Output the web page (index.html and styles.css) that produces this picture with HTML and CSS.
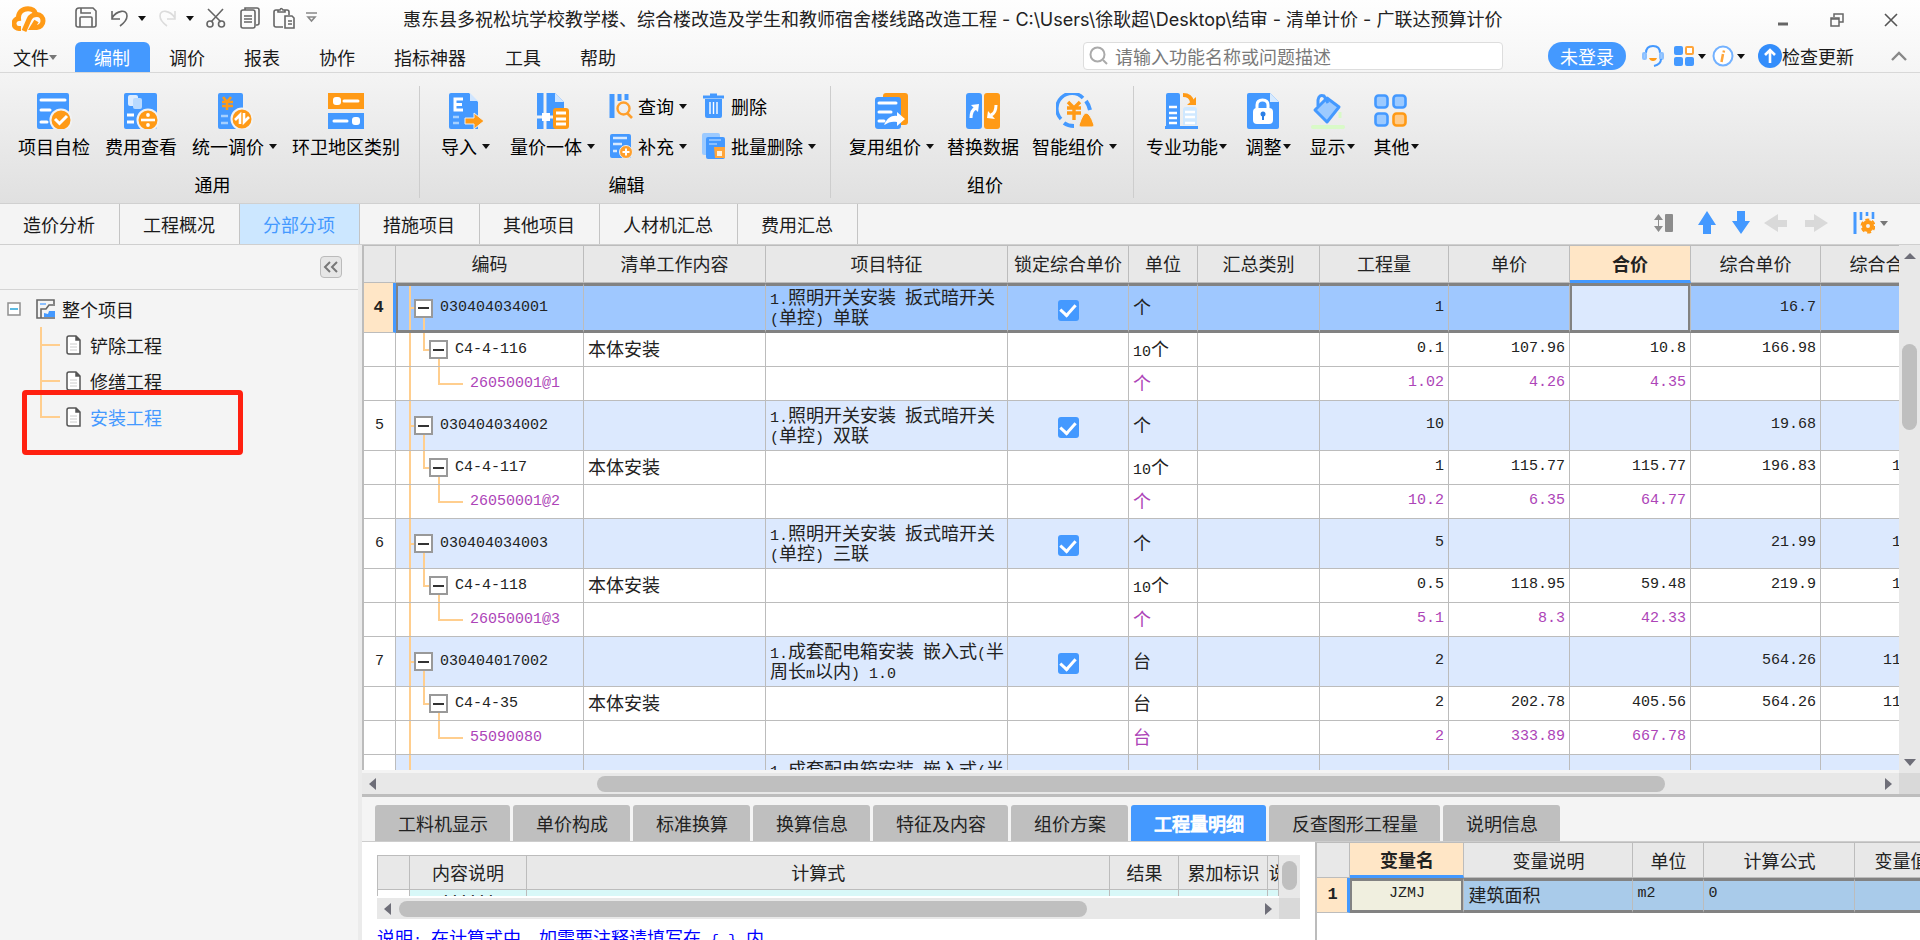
FILE: index.html
```html
<!DOCTYPE html>
<html lang="zh-CN">
<head>
<meta charset="utf-8">
<title>广联达预算计价</title>
<link rel="stylesheet" href="styles.css">
</head>
<body>
<div class="app">
  <header class="top">
    <div class="titlebar">
      <svg class="logo" width="34" height="26" viewBox="0 0 34 26" fill="none" stroke="#ff9a16" stroke-width="5"><path d="M9 22.500H7.500A5 5 0 0 1 6.500 12.500C6 6 11 2.800 16 2.800c4 0 7 2 7.500 5"/><path d="M12 25l5-11.500c1.500-3.500 4-5 8-5 3.500 0 6 3 6 6.500s-3 6.500-6 6.500h-4.500l4-6.500"/></svg>
      <div class="quick">
        <button aria-label="保存"><svg width="22" height="22" viewBox="0 0 22 22" class="ln"><path d="M4 1h14l3 3v14q0 2-2 2H3q-2 0-2-2V4q0-3 3-3zM5 20v-9q0-1 1-1h10q1 0 1 1v9M6 1v5h10"/></svg></button>
        <button aria-label="撤销" class="q-undo"><svg width="18" height="20" viewBox="0 0 18 20" class="ln"><path d="M1 3v8h8M1 10C6 2 16 1 16 8c0 4-3 7-7 10"/></svg><i class="tri"></i></button>
        <button aria-label="恢复" class="q-redo"><svg width="18" height="20" viewBox="0 0 18 20" class="ln pale"><path d="M16 3v8H8M16 10C11 2 1 1 1 8c0 4 3 7 7 10"/></svg><i class="tri"></i></button>
        <button aria-label="剪切" class="q-cut"><svg width="20" height="20" viewBox="0 0 20 20" class="ln"><path d="M2 1l13 13M17 1L5 14"/><circle cx="4" cy="16" r="3"/><circle cx="15.500" cy="16" r="3"/></svg></button>
        <button aria-label="复制" class="q-copy"><svg width="20" height="22" viewBox="0 0 20 22" class="ln"><path d="M5 3V1h12q2 0 2 2v13q0 2-2 2h-1"/><rect x="1" y="3" width="14" height="18" rx="2"/><path d="M4 9h8M4 12h8M4 15h8"/></svg></button>
        <button aria-label="粘贴" class="q-paste"><svg width="23" height="23" viewBox="0 0 23 23" class="ln"><path d="M10 20H3q-2 0-2-2V5q0-2 2-2h2M12 3h2q2 0 2 2v3M5 5V3h2q1-3 3 0h2v2zM13 9h6l2 2v10h-9V9zM15 14h4M15 17h4"/></svg></button>
        <button aria-label="自定义" class="q-more"><svg width="11" height="12" viewBox="0 0 11 12" class="ln thin"><path d="M0 1h11M2 5l3.500 4L9 5z"/></svg></button>
      </div>
      <h1>惠东县多祝松坑学校教学楼、综合楼改造及学生和教师宿舍楼线路改造工程 - C:\Users\徐耿超\Desktop\结审 - 清单计价 - 广联达预算计价</h1>
      <div class="winctl">
        <button aria-label="最小化"><svg width="14" height="14" viewBox="0 0 14 14"><path d="M2 11h10" stroke="#666" stroke-width="3"/></svg></button>
        <button aria-label="还原"><svg width="14" height="14" viewBox="0 0 14 14" fill="none" stroke="#666" stroke-width="1.500"><rect x="1" y="5" width="8" height="8"/><path d="M1 6h8M4 4V1h9v8H9"/></svg></button>
        <button aria-label="关闭"><svg width="14" height="14" viewBox="0 0 14 14"><path d="M1 1l12 12M13 1L1 13" stroke="#555" stroke-width="1.600"/></svg></button>
      </div>
    </div>
    <div class="menubar">
      <nav>
        <button class="file">文件<i class="tri gray"></i></button><button class="on">编制</button><button>调价</button><button>报表</button><button>协作</button><button>指标神器</button><button>工具</button><button>帮助</button>
      </nav>
      <label class="search"><svg width="20" height="20" viewBox="0 0 20 20" fill="none" stroke="#aaa" stroke-width="2"><circle cx="8.500" cy="8.500" r="7"/><path d="M14 14l4 4"/></svg><input type="text" placeholder="请输入功能名称或问题描述" aria-label="搜索"></label>
      <button class="login">未登录</button>
      <button class="m-a" aria-label="客服"><svg width="22" height="24" viewBox="0 0 22 24" fill="none" stroke="#4499ff" stroke-width="2"><path d="M4 9C4 4 7 2 11 2s7 2 7 7"/><rect x="1" y="9" width="3" height="6" rx="1" fill="#9ccaff" stroke="#8cc0ff"/><rect x="18" y="9" width="3" height="6" rx="1" fill="#9ccaff" stroke="#8cc0ff"/><path d="M19 15c0 4-3 6-7 7"/><path d="M7 14h8q-1 3-4 3t-4-3z" fill="#ff9a16" stroke="none"/></svg></button>
      <button class="m-b" aria-label="应用"><svg width="22" height="22" viewBox="0 0 22 22"><rect x="1" y="1" width="9" height="9" rx="2" fill="#4499ff"/><rect x="13" y="2" width="7" height="7" rx="1" fill="#fff" stroke="#ffa53a" stroke-width="2"/><rect x="1" y="12" width="9" height="9" rx="2" fill="#4499ff"/><rect x="12" y="12" width="9" height="9" rx="2" fill="#4499ff"/></svg><i class="tri"></i></button>
      <button class="m-c" aria-label="信息"><svg width="22" height="22" viewBox="0 0 22 22"><circle cx="11" cy="11" r="9.500" fill="#fff" stroke="#72b1ff" stroke-width="2"/><path d="M12 5.500l-.4 2M11 9l-1.500 8" stroke="#ffa53a" stroke-width="2.500"/></svg><i class="tri"></i></button>
      <button class="update"><svg width="24" height="24" viewBox="0 0 24 24"><circle cx="12" cy="12" r="12" fill="#338dfb"/><path d="M12 19V7M7 11l5-5 5 5" fill="none" stroke="#fff" stroke-width="2.600"/></svg>检查更新</button>
      <button class="fold" aria-label="收起"><svg width="16" height="10" viewBox="0 0 16 10"><path d="M1 9l7-7 7 7" fill="none" stroke="#888" stroke-width="2.400"/></svg></button>
    </div>
  </header>

  <section class="ribbon">
    <div class="group g1">
      <div class="tools">
        <button class="big"><svg width="36" height="36" viewBox="0 0 36 36"><rect x="1" width="32" height="36" rx="2" fill="#4499ff"/><path d="M5 7h24M5 17h9M5 29h6" stroke="#fff" stroke-width="3" stroke-linecap="round"/><circle cx="25" cy="27" r="10.500" fill="#ff9a16" stroke="#f2f2f2" stroke-width="2"/><path d="M19 26l4.500 4.500L31 23" fill="none" stroke="#fff" stroke-width="3"/></svg><span>项目自检</span></button>
        <button class="big"><svg width="36" height="36" viewBox="0 0 36 36"><rect x="1" width="33" height="36" rx="2" fill="#4499ff"/><rect x="5" y="2" width="10" height="11" rx="2" fill="#dcecff"/><rect x="10" y="5" width="9" height="11" rx="2" fill="#b9daff"/><path d="M4 22h7M4 29h7" stroke="#fff" stroke-width="3"/><circle cx="25" cy="27" r="10.500" fill="#ff9a16" stroke="#f2f2f2" stroke-width="2"/><path d="M18 27h14" stroke="#fff" stroke-width="2.600"/><circle cx="25" cy="22" r="1.900" fill="#fff"/><circle cx="25" cy="32" r="1.900" fill="#fff"/></svg><span>费用查看</span></button>
        <button class="big"><svg width="36" height="36" viewBox="0 0 36 36"><rect x="1" width="25" height="36" rx="2" fill="#4499ff"/><path d="M6 4l4 5 4-5M5 9h11M5 13h11M10 8v9" fill="none" stroke="#ff9a16" stroke-width="2.600"/><path d="M4 23h7M4 30h7" stroke="#a5d0ff" stroke-width="2.600"/><circle cx="25" cy="26" r="10.500" fill="#ff9a16" stroke="#f2f2f2" stroke-width="2"/><path d="M18 27l5-5v9M32 24l-5 5v-9" fill="none" stroke="#fff" stroke-width="2.600"/></svg><span>统一调价<i class="tri"></i></span></button>
        <button class="big"><svg width="36" height="36" viewBox="0 0 36 36"><rect width="36" height="16" fill="#ff9a16"/><rect y="20" width="36" height="16" fill="#4499ff"/><rect x="5" y="4" width="8" height="8" rx="3" fill="#fff"/><path d="M16 8h14M6 28h13" stroke="#fff" stroke-width="3" stroke-linecap="round"/><rect x="24" y="24" width="8" height="8" rx="3" fill="#fff"/></svg><span>环卫地区类别</span></button>
      </div>
      <div class="gname">通用</div>
    </div>
    <div class="group g2">
      <div class="tools">
        <button class="big"><svg width="36" height="36" viewBox="0 0 36 36"><path d="M3 0h18l9 9v27H3q-2 0-2-2V2q0-2 2-2z" fill="#4499ff"/><path d="M22 0l8 8h-8z" fill="#cfe5ff"/><path d="M15 6H7v11h8M7 11.500h7" fill="none" stroke="#fff" stroke-width="3"/><path d="M5 24h6M5 30h6" stroke="#a5d0ff" stroke-width="2.600"/><path d="M17 25h9v-5l10 8-10 8v-5h-9z" fill="#ff9a16" stroke="#eee" stroke-width="1"/></svg><span>导入<i class="tri"></i></span></button>
        <button class="big"><svg width="36" height="36" viewBox="0 0 36 36"><path d="M2 0h18l9 9v27H2z" fill="#4499ff"/><path d="M20 0l9 9h-9z" fill="#cfe5ff"/><path d="M10 0v36M2 24h22" stroke="#f2f2f2" stroke-width="3"/><rect x="7" y="20" width="8" height="8" fill="#fff"/><rect x="18" y="15" width="16" height="21" rx="3" fill="#ff9a16"/><path d="M21 20h10M21 26h10M21 31h10" stroke="#fff" stroke-width="3"/></svg><span>量价一体<i class="tri"></i></span></button>
        <div class="smalls">
          <button class="small"><svg width="24" height="26" viewBox="0 0 24 26"><path d="M3 1v24" stroke="#4499ff" stroke-width="5"/><path d="M10.500 1v7M17.500 1v6" stroke="#4499ff" stroke-width="4"/><circle cx="14.500" cy="15.500" r="6" fill="none" stroke="#ff9f2b" stroke-width="2.400"/><path d="M18 20l5 5" stroke="#ff9f2b" stroke-width="2.600"/></svg><span>查询<i class="tri"></i></span></button>
          <button class="small"><svg width="24" height="26" viewBox="0 0 24 26"><path d="M8 2h7M1 4h21" stroke="#4499ff" stroke-width="3"/><path d="M3 6h17v17q0 2-2 2H5q-2 0-2-2z" fill="#4499ff"/><path d="M8 9v12M11.500 9v12M15 9v12" stroke="#fff" stroke-width="1.400"/></svg><span>删除</span></button>
          <button class="small"><svg width="24" height="26" viewBox="0 0 24 26"><rect x="1" y="1" width="21" height="24" rx="2" fill="#4499ff"/><path d="M4 5h14M4 11h9M4 18h4" stroke="#d6e9ff" stroke-width="2.400"/><circle cx="17" cy="19" r="6.500" fill="#ff9f2b" stroke="#eee"/><path d="M17 15.500v7M13.500 19h7" stroke="#fff" stroke-width="2"/></svg><span>补充<i class="tri"></i></span></button>
          <button class="small"><svg width="24" height="26" viewBox="0 0 24 26"><rect x="0" y="0" width="18" height="22" rx="2" fill="#9ccaff"/><rect x="4" y="4" width="19" height="22" rx="2" fill="#4499ff"/><path d="M7 7h12M7 11h8" stroke="#8ac0ff" stroke-width="2"/><path d="M12 14h11v11H13z" fill="#ffa53a"/><rect x="15" y="18" width="5" height="5" fill="#fff2dc"/></svg><span>批量删除<i class="tri"></i></span></button>
        </div>
      </div>
      <div class="gname">编辑</div>
    </div>
    <div class="group g3">
      <div class="tools">
        <button class="big"><svg width="36" height="36" viewBox="0 0 36 36"><rect x="9" width="25" height="32" rx="3" fill="#ff9a16"/><rect x="1" y="4" width="26" height="32" rx="3" fill="#4499ff"/><path d="M5 10h17M5 19h12M5 28h5" stroke="#fff" stroke-width="3" stroke-linecap="round"/><path d="M10 32c3-7 8-10 13-9v-4l8 7-8 7v-4c-5-1-8 0-13 3z" fill="#fff"/></svg><span>复用组价<i class="tri"></i></span></button>
        <button class="big"><svg width="36" height="36" viewBox="0 0 36 36"><rect x="1" width="16" height="36" rx="3" fill="#4499ff"/><rect x="19" width="16" height="36" rx="3" fill="#ff9a16"/><path d="M6 25q0-8 5-10M31 12q0 8-5 10" fill="none" stroke="#fff" stroke-width="3"/><path d="M6 12l8-1-1 8zM30 26l-8-1 1-7z" fill="#fff"/></svg><span>替换数据</span></button>
        <button class="big"><svg width="38" height="36" viewBox="0 0 38 36"><path d="M5 26A15 15 0 0 1 27 5" fill="none" stroke="#4499ff" stroke-width="3.500"/><path d="M30 8q3 4 4 9M8 30q4 3 10 3" fill="none" stroke="#4499ff" stroke-width="4"/><path d="M12 9l6 6 6-6M11 15h14M11 20h14M18 14v13" fill="none" stroke="#ff9a16" stroke-width="3.400"/><path d="M30 20q4 0 8 12 0 2-2 2H25q-2 0-2-2 4-12 7-12z" fill="#ff9a16" stroke="#eee"/></svg><span>智能组价<i class="tri"></i></span></button>
      </div>
      <div class="gname">组价</div>
    </div>
    <div class="group g4">
      <div class="tools">
        <button class="big tight"><svg width="36" height="36" viewBox="0 0 36 36"><path d="M2 33V2q0-2 2-2h10q2 0 2 2v31h18v3H1v-3z" fill="#4499ff"/><path d="M5 14h8M5 20h8M5 25h8M5 30h8" stroke="#fff" stroke-width="2.600"/><path d="M19 17q0-3 3-3h8q3 0 3 3v15H19z" fill="#cfe8ff"/><path d="M21 19h10M21 24h10M21 30h10" stroke="#fff" stroke-width="2.600"/><path d="M19 2q8 0 9 7" fill="none" stroke="#ff9a16" stroke-width="4"/><path d="M23 12h9V4z" fill="#ff9a16"/></svg><span>专业功能<i class="tri"></i></span></button>
        <button class="big tight"><svg width="36" height="36" viewBox="0 0 36 36"><path d="M4 0h21l9 9v25q0 2-2 2H4q-2 0-2-2V2q0-2 2-2z" fill="#4499ff"/><path d="M25 0l9 9h-9z" fill="#d6eaff"/><path d="M12 17v-5q0-5 5.500-5T23 12v5" fill="none" stroke="#fff" stroke-width="3"/><rect x="8" y="15" width="20" height="16" rx="4" fill="#fff"/><circle cx="18" cy="21" r="2.500" fill="#2b7fe6"/><path d="M18 22v5" stroke="#2b7fe6" stroke-width="2"/></svg><span>调整<i class="tri"></i></span></button>
        <button class="big tight"><svg width="36" height="36" viewBox="0 0 36 36"><path d="M18 5L6 17l12 12 12-15z" fill="#9ccaff" stroke="#4499ff" stroke-width="3" stroke-linejoin="round"/><path d="M9 13V7q1-6 6-4l4 7" fill="none" stroke="#4499ff" stroke-width="3"/><path d="M31 19v6" stroke="#d9fac8" stroke-width="3"/><path d="M4 34h30" stroke="#d9fac8" stroke-width="4" stroke-linecap="round"/></svg><span>显示<i class="tri"></i></span></button>
        <button class="big tight"><svg width="36" height="36" viewBox="0 0 36 36" fill="#9ccaff" stroke="#4499ff" stroke-width="2.600"><rect x="2.500" y="2.500" width="12" height="12" rx="3"/><rect x="20.500" y="2.500" width="12" height="12" rx="3"/><rect x="2.500" y="20.500" width="12" height="12" rx="3"/><rect x="20.500" y="20.500" width="12" height="12" rx="3" fill="#ffcc8c" stroke="#ff9a16"/></svg><span>其他<i class="tri"></i></span></button>
      </div>
    </div>
  </section>

  <div class="pagetabs">
    <button>造价分析</button><button>工程概况</button><button class="on">分部分项</button><button>措施项目</button><button>其他项目</button><button>人材机汇总</button><button>费用汇总</button>
    <div class="gridtools">
      <button aria-label="行高"><svg width="20" height="20" viewBox="0 0 20 20" fill="#8c8c8c"><path d="M0 7l4.500-6L9 7zM0 13l4.500 6L9 13z"/><path d="M4 7h1v6H4z"/><rect x="11" y="1" width="8" height="18" rx="1"/></svg></button>
      <button aria-label="上移"><svg width="18" height="24" viewBox="0 0 18 24"><path d="M9 0l9 14h-5v9H5v-9H0z" fill="#4499ff"/></svg></button>
      <button aria-label="下移"><svg width="18" height="24" viewBox="0 0 18 24"><path d="M9 23l9-13h-5V0H5v10H0z" fill="#4499ff"/></svg></button>
      <button aria-label="左移"><svg width="24" height="18" viewBox="0 0 24 18"><path d="M0 9l14-9v6h9v7h-9v5z" fill="#d9d9d9"/></svg></button>
      <button aria-label="右移"><svg width="24" height="18" viewBox="0 0 24 18"><path d="M24 9L10 0v6H1v7h9v5z" fill="#d9d9d9"/></svg></button>
      <button aria-label="列设置" class="cfg"><svg width="22" height="24" viewBox="0 0 22 24"><path d="M2 1v22" stroke="#4499ff" stroke-width="3"/><path d="M8 1v8M14 1v4M20 1v7" stroke="#4499ff" stroke-width="2.600"/><circle cx="15" cy="15" r="4" fill="none" stroke="#ff9a16" stroke-width="4"/><circle cx="15" cy="15" r="6.500" fill="none" stroke="#ff9a16" stroke-width="2" stroke-dasharray="4 2.800"/></svg><i class="tri gray"></i></button>
    </div>
  </div>

  <div class="main">
    <aside class="side">
      <div class="sidehead"><button aria-label="折叠面板"><svg width="16" height="12" viewBox="0 0 16 12" fill="none" stroke="#777" stroke-width="2"><path d="M7 1L2 6l5 5M14 1L9 6l5 5"/></svg></button></div>
      <ul class="tree">
        <li class="root"><svg width="14" height="14" viewBox="0 0 14 14"><rect x="1" y="1" width="12" height="12" fill="#fff" stroke="#8f8f8f" stroke-width="1.500"/><path d="M3 7h8" stroke="#25a3d8" stroke-width="1.500"/></svg><svg width="20" height="20" viewBox="0 0 20 20" fill="none" stroke="#666" stroke-width="1.600"><path d="M18 5V1H1v18h18"/><path d="M5 19v-9h5l3-4h6" /><path d="M8 18v-4l4 1 1-3h6v6z" fill="#4499ff" stroke="none"/><path d="M4 5h6" stroke="#8cc0ff" stroke-width="2"/></svg><span>整个项目</span></li>
        <li><svg width="16" height="20" viewBox="0 0 16 20" fill="#fff" stroke="#555" stroke-width="1.500"><path d="M1 3q0-2 2-2h7l4 4v14H3q-2 0-2-2z"/><path d="M10 1v4h4" fill="#555"/><path d="M4 9h7M4 12h7M4 15h7" stroke="#ccc" stroke-width="1"/></svg><span>铲除工程</span></li>
        <li><svg width="16" height="20" viewBox="0 0 16 20" fill="#fff" stroke="#555" stroke-width="1.500"><path d="M1 3q0-2 2-2h7l4 4v14H3q-2 0-2-2z"/><path d="M10 1v4h4" fill="#555"/><path d="M4 9h7M4 12h7M4 15h7" stroke="#ccc" stroke-width="1"/></svg><span>修缮工程</span></li>
        <li class="cur"><svg width="16" height="20" viewBox="0 0 16 20" fill="#fff" stroke="#555" stroke-width="1.500"><path d="M1 3q0-2 2-2h7l4 4v14H3q-2 0-2-2z"/><path d="M10 1v4h4" fill="#555"/><path d="M4 9h7M4 12h7M4 15h7" stroke="#ccc" stroke-width="1"/></svg><span>安装工程</span><i class="mark"></i></li>
      </ul>
    </aside>

    <div class="work">
      <div class="gridbox">
        <div class="gridview">
          <table class="grid">
            <colgroup><col class="w-no"><col class="w-code"><col class="w-job"><col class="w-feat"><col class="w-lock"><col class="w-unit"><col class="w-cat"><col class="w-qty"><col class="w-price"><col class="w-price"><col class="w-comp"><col class="w-sum"></colgroup>
            <thead><tr><th></th><th>编码</th><th>清单工作内容</th><th>项目特征</th><th>锁定综合单价</th><th>单位</th><th>汇总类别</th><th>工程量</th><th>单价</th><th class="hot">合价</th><th>综合单价</th><th>综合合价</th></tr></thead>
            <tbody>
              <tr class="item sel"><td class="no">4</td><td class="l1"><div><b class="box"></b>030404034001</div></td><td></td><td class="feat"><div><span>1.</span>照明开关安装<span> </span>扳式暗开关<span>(</span>单控<span>) </span>单联</div></td><td class="lock"><input type="checkbox" checked aria-label="锁定综合单价"></td><td>个</td><td></td><td class="r">1</td><td class="r"></td><td class="r active"></td><td class="r">16.7</td><td class="r"></td></tr>
              <tr class="sub"><td class="no"></td><td class="l2"><div><b class="box"></b>C4-4-116</div></td><td>本体安装</td><td></td><td></td><td><span>10</span>个</td><td></td><td class="r">0.1</td><td class="r">107.96</td><td class="r">10.8</td><td class="r">166.98</td><td class="r"></td></tr>
              <tr class="mat"><td class="no"></td><td class="l3"><div>26050001@1</div></td><td></td><td></td><td></td><td>个</td><td></td><td class="r">1.02</td><td class="r">4.26</td><td class="r">4.35</td><td class="r"></td><td></td></tr>

              <tr class="item"><td class="no">5</td><td class="l1"><div><b class="box"></b>030404034002</div></td><td></td><td class="feat"><div><span>1.</span>照明开关安装<span> </span>扳式暗开关<span>(</span>单控<span>) </span>双联</div></td><td class="lock"><input type="checkbox" checked aria-label="锁定综合单价"></td><td>个</td><td></td><td class="r">10</td><td class="r"></td><td class="r"></td><td class="r">19.68</td><td class="r"></td></tr>
              <tr class="sub"><td class="no"></td><td class="l2"><div><b class="box"></b>C4-4-117</div></td><td>本体安装</td><td></td><td></td><td><span>10</span>个</td><td></td><td class="r">1</td><td class="r">115.77</td><td class="r">115.77</td><td class="r">196.83</td><td class="r">196.83</td></tr>
              <tr class="mat"><td class="no"></td><td class="l3"><div>26050001@2</div></td><td></td><td></td><td></td><td>个</td><td></td><td class="r">10.2</td><td class="r">6.35</td><td class="r">64.77</td><td class="r"></td><td></td></tr>

              <tr class="item"><td class="no">6</td><td class="l1"><div><b class="box"></b>030404034003</div></td><td></td><td class="feat"><div><span>1.</span>照明开关安装<span> </span>扳式暗开关<span>(</span>单控<span>) </span>三联</div></td><td class="lock"><input type="checkbox" checked aria-label="锁定综合单价"></td><td>个</td><td></td><td class="r">5</td><td class="r"></td><td class="r"></td><td class="r">21.99</td><td class="r">109.95</td></tr>
              <tr class="sub"><td class="no"></td><td class="l2"><div><b class="box"></b>C4-4-118</div></td><td>本体安装</td><td></td><td></td><td><span>10</span>个</td><td></td><td class="r">0.5</td><td class="r">118.95</td><td class="r">59.48</td><td class="r">219.9</td><td class="r">109.95</td></tr>
              <tr class="mat"><td class="no"></td><td class="l3"><div>26050001@3</div></td><td></td><td></td><td></td><td>个</td><td></td><td class="r">5.1</td><td class="r">8.3</td><td class="r">42.33</td><td class="r"></td><td></td></tr>

              <tr class="item"><td class="no">7</td><td class="l1"><div><b class="box"></b>030404017002</div></td><td></td><td class="feat"><div><span>1.</span>成套配电箱安装<span> </span>嵌入式<span>(</span>半周长<span>m</span>以内<span>) 1.0</span></div></td><td class="lock"><input type="checkbox" checked aria-label="锁定综合单价"></td><td>台</td><td></td><td class="r">2</td><td class="r"></td><td class="r"></td><td class="r">564.26</td><td class="r">1128.52</td></tr>
              <tr class="sub"><td class="no"></td><td class="l2"><div><b class="box"></b>C4-4-35</div></td><td>本体安装</td><td></td><td></td><td>台</td><td></td><td class="r">2</td><td class="r">202.78</td><td class="r">405.56</td><td class="r">564.26</td><td class="r">1128.52</td></tr>
              <tr class="mat"><td class="no"></td><td class="l3"><div>55090080</div></td><td></td><td></td><td></td><td>台</td><td></td><td class="r">2</td><td class="r">333.89</td><td class="r">667.78</td><td class="r"></td><td></td></tr>

              <tr class="item"><td class="no"></td><td class="l1 plain"></td><td></td><td class="feat"><div><span>1.</span>成套配电箱安装<span> </span>嵌入式<span>(</span>半周长</div></td><td></td><td></td><td></td><td></td><td></td><td></td><td></td><td></td></tr>
            </tbody>
          </table>
        </div>
        <div class="vbar"><i class="up"></i><i class="thumb"></i><i class="down"></i></div>
        <div class="hbar"><i class="left"></i><i class="gap1"></i><i class="thumb"></i><i class="gap2"></i><i class="right"></i></div>
        <div class="corner"></div>
      </div>

      <section class="detail">
        <div class="dtabs">
          <button>工料机显示</button><button>单价构成</button><button>标准换算</button><button>换算信息</button><button>特征及内容</button><button>组价方案</button><button class="on">工程量明细</button><button>反查图形工程量</button><button>说明信息</button>
        </div>
        <div class="dbody">
          <div class="calc">
            <div class="calcgrid">
              <div class="calcview">
                <table class="grid">
                  <colgroup><col class="w-no"><col class="c-desc"><col class="c-expr"><col class="w-unit"><col class="c-acc"><col class="c-last"></colgroup>
                  <thead><tr><th></th><th>内容说明</th><th>计算式</th><th>结果</th><th>累加标识</th><th class="clip">说</th></tr></thead>
                  <tbody><tr><td></td><td class="num">111111</td><td></td><td></td><td></td><td></td></tr></tbody>
                </table>
              </div>
              <div class="vbar"><i class="thumb"></i></div>
              <div class="hbar"><i class="left"></i><i class="thumb"></i><i class="gap2"></i><i class="right"></i></div>
              <div class="corner"></div>
            </div>
            <p class="note">说明<span>: </span>在计算式中<span>, </span>如需要注释请填写在<span> { } </span>内</p>
          </div>
          <div class="vars">
            <table class="grid">
              <colgroup><col class="v-no"><col class="v-name"><col class="v-desc"><col class="v-unit"><col class="v-expr"><col class="v-val"></colgroup>
              <thead><tr><th></th><th class="hot">变量名</th><th>变量说明</th><th>单位</th><th>计算公式</th><th>变量值</th></tr></thead>
              <tbody><tr class="sel"><td class="no">1</td><td class="active">JZMJ</td><td>建筑面积</td><td class="num">m2</td><td class="num">0</td><td></td></tr></tbody>
            </table>
          </div>
        </div>
      </section>
    </div>
  </div>
</div>
</body>
</html>
```
FILE: styles.css
```css
* { box-sizing: border-box; }
html, body { height: 100%; margin: 0; }
body {
  font: 18px/24px "Noto Sans CJK SC", sans-serif;
  color: #1a1a1a;
  overflow: hidden;
}
button {
  font: inherit; color: inherit; background: none; border: 0; padding: 0; margin: 0;
  display: inline-flex; align-items: center; white-space: nowrap; flex: none;
}
svg { display: block; flex: none; }
.app { height: 100vh; display: flex; flex-direction: column; background: #f4f4f4; }

.tri {
  display: inline-block; width: 0; height: 0; flex: none;
  border: 4px solid transparent; border-top: 5px solid #111; border-bottom: 0;
}
.tri.gray { border-top-color: #777; }

/* title and menu */
.top { background: linear-gradient(#fefefe, #f5f5f5); border-bottom: 1px solid #d8d8d8; }
.titlebar { height: 40px; display: flex; align-items: center; padding: 0 22px 0 12px; }
.quick { display: flex; align-items: center; margin-left: 29px; height: 34px; }
.logo { margin-bottom: 3px; }
.quick { margin-bottom: 4px; }
.ln { fill: none; stroke: #666; stroke-width: 1.6; }
.ln.pale { stroke: #dcdcdc; }
.ln.thin { stroke: #888; }
.q-undo { margin-left: 14px; gap: 9px; }
.q-redo { margin-left: 13px; gap: 9px; }
.q-cut { margin-left: 12px; }
.q-copy { margin-left: 14px; }
.q-paste { margin-left: 13px; }
.q-more { margin-left: 10px; }
.titlebar h1 {
  font: 18px/24px Inter, "Noto Sans CJK SC", sans-serif;
  margin: 0 0 0 86px; flex: 1; white-space: nowrap; overflow: hidden; color: #222;
}
.winctl { display: flex; gap: 40px; height: 34px; }
.menubar { height: 32px; display: flex; }
.menubar nav { display: flex; flex: 1; margin-top: 2px; }
.menubar nav button { padding: 0 20px 0 19px; border-radius: 6px 6px 0 0; }
.menubar nav .file { width: 75px; padding: 0 0 0 13px; }
.menubar nav .on { background: #4499ff; color: #fff; }
.search {
  width: 420px; height: 28px; display: flex; align-items: center; gap: 6px; padding-left: 5px; margin-top: 2px;
  background: #fff; border: 1px solid #ddd; border-radius: 4px;
}
.search input { flex: 1; border: 0; outline: 0; background: none; font: inherit; padding: 0; height: 24px; }
.search input::placeholder { color: #7a7a7a; opacity: 1; }
.menubar > button { height: 28px; margin-top: 2px; }
.menubar .login { background: #4499ff; color: #fff; border-radius: 14px; padding: 0 12px; margin-left: 45px; }
.menubar .m-a { margin-left: 16px; }
.menubar .m-b { margin-left: 9px; gap: 3px; }
.menubar .m-c { margin-left: 6px; gap: 3px; }
.menubar .update { margin-left: 13px; }
.menubar .fold { margin: 2px 13px 0 37px; }

/* ribbon */
.ribbon {
  height: 131px; display: flex; padding: 13px 0 5px;
  background: linear-gradient(#f4f4f4, #e0e0e0); border-bottom: 1px solid #d0d0d0; color: #000;
}
.group { display: flex; flex-direction: column; border-right: 1px solid #cdcdcd; }
.group:last-child { border: 0; }
.g1 { width: 420px; padding-left: 18px; }
.g2 { width: 411px; padding-left: 21px; }
.g3 { width: 303px; padding-left: 18px; }
.g4 { padding-left: 12px; }
.tools { display: flex; gap: 15px; height: 85px; padding-top: 7px; }
.g2 .tools { gap: 20px; }
.g3 .tools { gap: 13px; }
.g4 .tools { gap: 18px; }
.big { flex-direction: column; gap: 5px; align-self: flex-start; }
.big span, .small span { display: flex; align-items: center; gap: 5px; }
.big.tight span { gap: 1px; }
.big.tight svg { margin-right: 10px; }
.smalls { display: grid; grid-template-columns: auto auto; column-gap: 15px; row-gap: 14px; align-content: start; margin-left: -6px; }
.small { gap: 5px; height: 26px; }
.gname { text-align: center; padding-right: 12px; line-height: 28px; }
.g2 .gname { padding-right: 18px; }

/* page tabs */
.pagetabs { height: 41px; display: flex; border-bottom: 1px solid #cfcfcf; background: #f4f4f4; }
.pagetabs > button { padding: 0 24px 0 23px; border-right: 1px solid #c4c4c4; }
.pagetabs .on { background: #cce7ff; color: #4499ff; }
.gridtools { margin-left: auto; display: flex; align-items: center; padding: 0 32px 2px 0; }
.gridtools button + button { margin-left: 16px; }
.gridtools button:nth-child(2) { margin-left: 24px; }
.gridtools button:nth-child(4) { margin-left: 14px; }
.gridtools .cfg { margin-left: 25px; gap: 5px; }

/* project tree */
.main { flex: 1; display: flex; min-height: 0; }
.side { width: 362px; flex: none; border-right: 4px solid #ebebeb; }
.sidehead { height: 45px; border-bottom: 1px solid #d4d4d4; display: flex; justify-content: flex-end; align-items: center; padding-right: 16px; }
.sidehead button { width: 22px; height: 22px; justify-content: center; border: 1px solid #bbb; border-radius: 4px; background: #e6e6e6; }
.tree { list-style: none; margin: 0; padding: 1px 0 0; }
.tree li { height: 36px; display: flex; align-items: center; gap: 8px; padding-left: 66px; position: relative; }
.tree .root { padding-left: 7px; }
.tree .root svg + svg { margin-left: 7px; }
.tree .root span { margin-left: -2px; }
.tree li:not(.root) {
  background:
    linear-gradient(#ffce8e, #ffce8e) 40px 0 / 2px 100% no-repeat,
    linear-gradient(#ffce8e, #ffce8e) 40px 50% / 20px 2px no-repeat;
}
.tree li.cur {
  color: #4499ff;
  background:
    linear-gradient(#ffce8e, #ffce8e) 40px 0 / 2px 18px no-repeat,
    linear-gradient(#ffce8e, #ffce8e) 40px 50% / 20px 2px no-repeat;
}
.mark { position: absolute; left: 22px; top: -9px; width: 221px; height: 65px; border: 5px solid #ff2010; border-radius: 4px; }

/* grids */
.work { flex: 1; min-width: 0; display: flex; flex-direction: column; }
.gridbox, .calcgrid { display: grid; grid-template-columns: minmax(0, 1fr) 21px; }
.gridbox { flex: 1; min-height: 0; grid-template-rows: minmax(0, 1fr) 21px; border-bottom: 3px solid #bdbdbd; }
.gridview { overflow: hidden; border-bottom: 3px solid #f4f4f4; background: #fff; }
.grid { table-layout: fixed; border-collapse: separate; border-spacing: 0; color: #222; }
.gridview .grid { width: 1589px; border-left: 2px solid #bcbcbc; }
.w-no { width: 32px; } .w-code { width: 188px; } .w-job { width: 182px; } .w-feat { width: 242px; }
.w-lock { width: 121px; } .w-unit { width: 69px; } .w-cat { width: 122px; } .w-qty { width: 129px; }
.w-price { width: 121px; } .w-comp { width: 130px; } .w-sum { width: 130px; }
.grid th {
  font-weight: normal; background: #e8e8e8; padding: 0 0 3px; height: 37px; white-space: nowrap;
  border: solid #bcbcbc; border-width: 1px 1px 1px 0;
}
.gridview th { height: 38px; }
.grid th.hot { background: #ffe6c6; font-weight: bold; border-bottom: 3px solid #4499ff; padding-bottom: 1px; }
.grid td {
  padding: 0 4px 4px; border: solid #bcbcbc; border-width: 0 1px 1px 0;
  height: 34px; white-space: nowrap; overflow: hidden; background-color: #fff;
}
.grid .r, .grid .l1, .grid .l2, .grid .l3, .grid td span, .grid .num, .grid .no, .note span {
  font-family: "Liberation Mono", monospace; font-size: 15px;
}
.grid td span, .note span { white-space: pre; line-height: 0; }
.grid .r { text-align: right; padding-bottom: 1px; }
.grid .no { text-align: center; padding: 0; }
.grid .item td { height: 50px; background-color: #dce9fe; }
.grid .item .no { background: #fff; }
.grid .mat td { color: #ad44b8; }
.grid .mat .no { color: #222; }
.grid .feat { padding-right: 0; }
.feat div { line-height: 20px; white-space: normal; }
.grid td.lock { text-align: center; padding-bottom: 0; }
.lock input {
  appearance: none; width: 21px; height: 21px; margin: 0; vertical-align: middle;
  display: inline-grid; place-items: center; background: #4499ff; border-radius: 3px;
}
.lock input::before {
  content: ""; width: 7px; height: 12px; margin-bottom: 3px;
  border: solid #fff; border-width: 0 3px 3px 0; transform: rotate(42deg);
}
.l1 div, .l2 div, .l3 div { display: flex; align-items: center; gap: 7px; }
.grid .l1 { padding: 0 0 0 18px; } .grid .l2 { padding: 0 0 0 33px; } .grid .l3 { padding: 0 0 0 74px; }
.box { width: 19px; height: 19px; flex: none; border: 2px solid #999; background: linear-gradient(#333, #333) center / 11px 2px no-repeat #fff; }
.grid .l1, .grid .l2, .grid .l3 { --g: linear-gradient(#ffce8e, #ffce8e); background-repeat: no-repeat; }
.grid .l1 { background-image: var(--g), var(--g), var(--g); background-position: 13px 0, 13px 50%, 27px 100%; background-size: 2px 100%, 6px 2px, 2px 50%; }
.grid .l2 { background-image: var(--g), var(--g), var(--g), var(--g); background-position: 13px 0, 27px 0, 27px 50%, 42px 100%; background-size: 2px 100%, 2px 50%, 6px 2px, 2px 50%; }
.grid .l3 { background-image: var(--g), var(--g), var(--g); background-position: 13px 0, 42px 0, 42px 50%; background-size: 2px 100%, 2px 50%, 25px 2px; }
.grid .l1.plain { background-image: var(--g); background-position: 13px 0; background-size: 2px 100%; }

.grid .sel td { background-color: #9fc8ff; border-bottom: 3px solid #828282; border-top: 3px solid #828282; }
.grid .sel .no { background: #ffe6c6; font-weight: bold; font-size: 17px; border: solid #bcbcbc; border-width: 0 3px 1px 0; border-right-color: #4499ff; }
.grid .sel .active { background: #dce9fe; box-shadow: inset 2px 0 #828282, inset -2px 0 #828282; }
.sel .no + td { box-shadow: inset 2px 0 #828282; }

/* scrollbars */
.vbar { background: #e8e8e8; display: flex; flex-direction: column; align-items: center; }
.vbar .up { border: 6px solid transparent; border-bottom: 6px solid #6e6e78; border-top: 0; margin-top: 8px; }
.vbar .down { border: 6px solid transparent; border-top: 7px solid #6e6e78; border-bottom: 0; margin: auto 0 7px; }
.vbar .thumb { width: 15px; border-radius: 8px; background: #bfbfbf; height: 86px; margin-top: 85px; }
.hbar { background: #e8e8e8; display: flex; align-items: center; height: 21px; padding: 0 7px; }
.hbar .thumb { height: 16px; border-radius: 8px; background: #bfbfbf; flex: 1067; }
.hbar .left { border: 6px solid transparent; border-right: 7px solid #6e6e78; border-left: 0; }
.hbar .right { border: 6px solid transparent; border-left: 7px solid #6e6e78; border-right: 0; }
.gap1 { flex: 221; } .gap2 { flex: 220; }
.corner { background: #d9d9d9; }

/* detail panel */
.detail { height: 143px; flex: none; display: flex; flex-direction: column; }
.dtabs { display: flex; gap: 3px; padding: 8px 0 0 13px; height: 45px; border-bottom: 1px solid #cdcdcd; }
.dtabs button { padding: 0 22px 0 23px; height: 36px; background: #bfbfbf; border-radius: 3px 3px 0 0; color: #222; }
.dtabs .on { background: #4499ff; color: #fff; -webkit-text-stroke: 1px #fff; }
.dbody { flex: 1; display: flex; min-height: 0; background: #fff; }
.calc { flex: 0 1 61.2%; padding: 13px 15px 0 15px; min-width: 0; overflow: hidden; }
.calcview { overflow: hidden; height: 43px; border-bottom: 2px solid #fff; }
.calcgrid { grid-template-rows: 43px 21px; }
.calcview .grid { width: 100%; border-left: 1px solid #bcbcbc; }
.c-desc { width: 117px; } .c-acc { width: 89px; } .c-last { width: 11px; }
.calcview .grid th { height: 35px; padding-bottom: 1px; }
.calcview .grid th.clip { overflow: hidden; }
.calcview .grid td { background: #d8f8f8; vertical-align: top; padding-top: 0; text-align: center; }
.calcview .grid td:first-child { background: #fff; }
.calcgrid .vbar .thumb { height: 29px; margin-top: 6px; }
.calcgrid .hbar .left { margin-right: 8px; }
.calcgrid .hbar .thumb { flex: 689; }
.calcgrid .hbar .gap2 { flex: 179; }
.note { margin: 6px 0 0; color: #0000ff; line-height: 24px; white-space: nowrap; }
.vars { flex: 1; min-width: 0; overflow: hidden; border-left: 2px solid #bcbcbc; border-top: 1px solid #bcbcbc; }
.vars .grid { width: 631px; }
.v-no { width: 33px; } .v-name { width: 114px; } .v-desc { width: 169px; } .v-unit { width: 71px; }
.v-expr { width: 151px; } .v-val { width: 93px; }
.vars .grid th { height: 35px; border-top: 0; padding-bottom: 0; }
.vars .grid .sel td { background: #a9cbea; height: 35px; }
.vars .grid .sel .no { background: #ffe6c6; }
.vars .grid .sel .active { background: #f0efdf; text-align: center; font: 15px "Liberation Mono", monospace; }
```
